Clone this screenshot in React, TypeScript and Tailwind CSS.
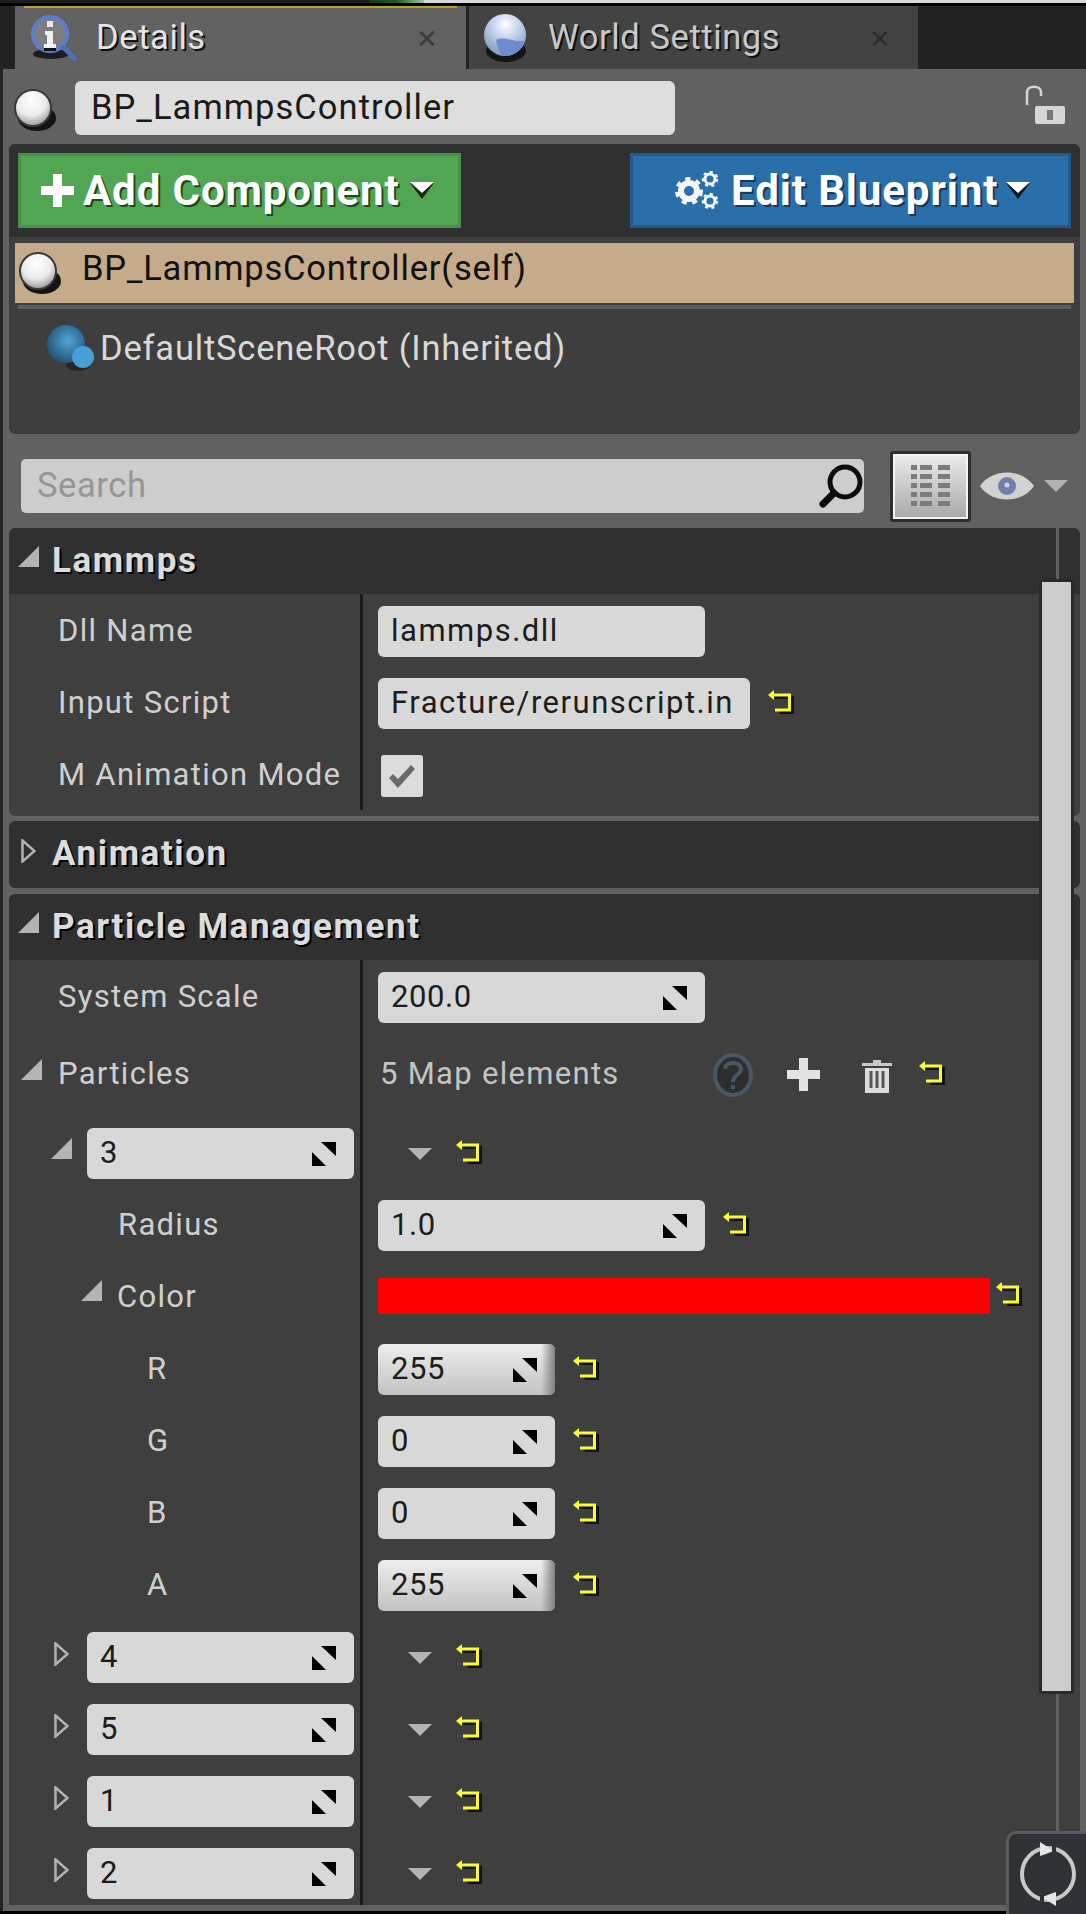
import type { ReactNode } from "react";

const Spin = () => (
  <svg width="24" height="24" viewBox="0 0 24 24" className="shrink-0">
    <polygon points="9,0 24,0 24,14" fill="#000" />
    <polygon points="0,10 14,24 0,24" fill="#000" />
  </svg>
);

const Reset = () => (
  <svg width="25" height="25" viewBox="0 2 25 25" className="shrink-0 overflow-visible">
    <g fill="none" stroke="#111" strokeWidth="3">
      <path d="M4 6H22V21H9" transform="translate(2.5 2.5)" />
    </g>
    <g fill="none" stroke="#fbfb2e" strokeWidth="3">
      <path d="M3 6H21.5V21H7" />
    </g>
    <polygon points="0,6 6,1 6,11" fill="#fbfb2e" />
  </svg>
);

const OpenTri = () => (
  <svg width="21" height="21" viewBox="0 0 21 21" className="shrink-0 mb-[10px]">
    <polygon points="0,21 21,0 21,21" fill="#b4b4b4" />
  </svg>
);

const ClosedTri = () => (
  <svg width="15" height="24" viewBox="0 0 15 24" className="shrink-0 mb-[8px]">
    <path d="M1.5 1.5V22.5L13.5 12Z" fill="none" stroke="#b4b4b4" strokeWidth="2.5" />
  </svg>
);

const DownTri = ({ color = "#b4b4b4" }: { color?: string }) => (
  <svg width="24" height="12" viewBox="0 0 24 12" className="shrink-0">
    <polygon points="0,0 24,0 12,12" fill={color} />
  </svg>
);

const Caret = () => (
  <svg width="24" height="18" viewBox="0 0 24 18" className="shrink-0">
    <polygon points="0,1 24,1 12,17" fill="#000" opacity="0.75" />
    <polygon points="0,0 24,0 12,11" fill="#fff" />
  </svg>
);

const Sphere = ({ id }: { id: string }) => (
  <svg width="44" height="44" viewBox="0 0 44 44" className="shrink-0">
    <defs>
      <radialGradient id={id} cx="0.45" cy="0.3" r="0.75">
        <stop offset="0" stopColor="#ffffff" />
        <stop offset="0.55" stopColor="#ebebeb" />
        <stop offset="1" stopColor="#8e8e8e" />
      </radialGradient>
    </defs>
    <ellipse cx="24" cy="30" rx="19" ry="13" fill="#141414" />
    <circle cx="20" cy="20" r="18" fill={`url(#${id})`} stroke="#3a3a3a" strokeWidth="2" />
  </svg>
);

const BlueSphere = () => (
  <svg width="50" height="48" viewBox="0 0 50 48" className="shrink-0">
    <defs>
      <radialGradient id="bs" cx="0.55" cy="0.42" r="0.62">
        <stop offset="0" stopColor="#4fa6d6" />
        <stop offset="1" stopColor="#1f4f72" />
      </radialGradient>
    </defs>
    <ellipse cx="32" cy="40" rx="12" ry="6" fill="#1c1c1c" opacity="0.7" />
    <circle cx="20" cy="19" r="19" fill="url(#bs)" />
    <circle cx="37" cy="32" r="11" fill="#46a0d6" />
  </svg>
);

const InfoIcon = () => (
  <svg width="50" height="50" viewBox="0 0 50 50" className="shrink-0">
    <ellipse cx="22" cy="41" rx="18" ry="5" fill="#1c1c1c" />
    <circle cx="21" cy="21" r="17" fill="#7d7d7d" stroke="#5c7dcc" strokeWidth="4" />
    <path d="M33 33L47 47" stroke="#4c6fc0" strokeWidth="5" />
    <rect x="18" y="8" width="6" height="6" fill="#e8e8e8" />
    <path d="M16 18H24V31H27V35H15V31H18V22H16Z" fill="#f0f0f0" />
    <rect x="15" y="35" width="12" height="3" fill="#111" />
  </svg>
);

const GlobeIcon = () => (
  <svg width="46" height="50" viewBox="0 0 46 50" className="shrink-0">
    <defs>
      <radialGradient id="gl" cx="0.52" cy="0.25" r="0.8">
        <stop offset="0" stopColor="#ffffff" />
        <stop offset="0.4" stopColor="#c5d3ec" />
        <stop offset="1" stopColor="#7d8fb8" />
      </radialGradient>
    </defs>
    <ellipse cx="24" cy="38" rx="20" ry="11" fill="#151515" />
    <circle cx="23" cy="22" r="21" fill="url(#gl)" />
    <path d="M14 27C22 23 30 29 42 28C40 37 32 43 23 43C19 43 16 37 14 27Z" fill="#6f8bcf" />
  </svg>
);

const LockIcon = () => (
  <svg width="40" height="40" viewBox="0 0 40 40" className="shrink-0">
    <path d="M2 21V8C2 1 16 1 16 8V12" fill="none" stroke="#d6d6d6" strokeWidth="2.5" />
    <rect x="10" y="22" width="30" height="18" rx="2" fill="#d6d6d6" />
    <rect x="22" y="26" width="6" height="10" fill="#777" />
  </svg>
);

const GearsIcon = () => (
  <svg width="46" height="42" viewBox="0 0 46 42" className="shrink-0">
    <g fill="none" stroke="#f4f4f4">
      <circle cx="14" cy="21" r="8" strokeWidth="6" />
      <circle cx="14" cy="21" r="12" strokeWidth="4" strokeDasharray="5 5.5" />
      <circle cx="35" cy="9" r="5" strokeWidth="3" />
      <circle cx="35" cy="9" r="7" strokeWidth="2.5" strokeDasharray="3 3.5" />
      <circle cx="35" cy="31" r="5" strokeWidth="3" />
      <circle cx="35" cy="31" r="7" strokeWidth="2.5" strokeDasharray="3 3.5" />
    </g>
  </svg>
);

const SearchGlass = () => (
  <svg width="46" height="44" viewBox="0 0 46 44" className="shrink-0">
    <circle cx="27" cy="18" r="15" fill="none" stroke="#0c0c0c" strokeWidth="5" />
    <path d="M16 29L5 40" stroke="#0c0c0c" strokeWidth="7" strokeLinecap="round" />
  </svg>
);

const GridGlyph = () => (
  <svg width="40" height="42" viewBox="0 0 40 42" className="shrink-0">
    {[0, 9, 18, 27, 36].map((y) => (
      <g key={y} fill="#7c7c7c">
        <rect x="0" y={y} width="6" height="5" />
        <rect x="9" y={y} width="12" height="5" />
        <rect x="27" y={y} width="12" height="5" />
      </g>
    ))}
  </svg>
);

const EyeIcon = () => (
  <svg width="54" height="32" viewBox="0 0 54 32" className="shrink-0">
    <path d="M0 16C12 -2 42 -2 54 16C42 34 12 34 0 16Z" fill="#d2d2d2" />
    <circle cx="27" cy="16" r="9" fill="#6f83a8" />
    <circle cx="27" cy="15" r="2.5" fill="#cdd5e2" />
  </svg>
);

const HelpIcon = () => (
  <svg width="42" height="46" viewBox="0 0 42 46" className="shrink-0">
    <ellipse cx="21" cy="23" rx="18" ry="20" fill="#2e2e2e" stroke="#4a5666" strokeWidth="4" />
    <path d="M13 17C13 9 29 9 29 17C29 23 21 22 21 30" fill="none" stroke="#4a5666" strokeWidth="4" />
    <rect x="19" y="33" width="4" height="4" fill="#4a5666" />
  </svg>
);

const PlusIcon = ({ color = "#e2e2e2" }: { color?: string }) => (
  <svg width="33" height="33" viewBox="0 0 33 33" className="shrink-0">
    <path d="M12 0H21V12H33V21H21V33H12V21H0V12H12Z" fill={color} />
  </svg>
);

const TrashIcon = () => (
  <svg width="30" height="36" viewBox="0 0 30 36" className="shrink-0">
    <path d="M0 6H11V3H19V6H30V9H0Z" fill="#c8c8c8" />
    <path d="M3 11H27V36H3Z" fill="#dcdcdc" />
    <path d="M9 14V31M15 14V31M21 14V31" stroke="#555" strokeWidth="3" />
  </svg>
);

const RefreshIcon = () => (
  <svg width="60" height="66" viewBox="0 0 60 66" className="shrink-0">
    <circle cx="30" cy="33" r="26" fill="none" stroke="#c9c9c9" strokeWidth="4" />
    <polygon points="22,1 36,10 22,15" fill="#e6e6e6" />
    <polygon points="38,65 24,56 38,51" fill="#e6e6e6" />
    <path d="M36 3V12M24 54V63" stroke="#2f3338" strokeWidth="4" />
  </svg>
);

const Field = ({
  text,
  width,
  spin = false,
  shaded = false,
}: {
  text: string;
  width: string;
  spin?: boolean;
  shaded?: boolean;
}) => (
  <div
    className={`relative h-[51px] shrink-0 rounded-[6px] flex items-center justify-between pl-[13px] pr-[18px] text-[#1c1c1c] overflow-hidden ${width} ${
      shaded ? "bg-gradient-to-b from-[#eeeeee] to-[#c2c2c2]" : "bg-[#d8d8d8]"
    }`}
  >
    <span className={`whitespace-nowrap ${spin ? "tracking-[0.6px]" : "tracking-[1.5px]"}`}>{text}</span>
    {spin && <Spin />}
    {shaded && (
      <div className="absolute right-0 top-0 h-full w-[14px] bg-gradient-to-r from-transparent to-[#808080]" />
    )}
  </div>
);

const Row = ({
  left,
  right,
  height = "h-[72px]",
  top = "pt-3",
}: {
  left: ReactNode;
  right: ReactNode;
  height?: string;
  top?: string;
}) => (
  <div className={`flex shrink-0 ${height}`}>
    <div className={`w-[354px] shrink-0 border-r-[3px] border-[#1b1b1b] ${top}`}>
      <div className="h-[51px] flex items-center text-[#cfcfcf] whitespace-nowrap tracking-[1.3px]">{left}</div>
    </div>
    <div className={`flex-1 pl-[15px] ${top}`}>
      <div className="h-[51px] flex items-center">{right}</div>
    </div>
  </div>
);

const Header = ({ title, open, height }: { title: string; open: boolean; height: string }) => (
  <div className={`flex items-center bg-[#303030] pl-[9px] ${height}`}>
    <div className="w-[34px] shrink-0 flex items-center">
      {open ? (
        <OpenTri />
      ) : (
        <div className="pl-[3px] flex">
          <ClosedTri />
        </div>
      )}
    </div>
    <span className="font-bold text-[35px] tracking-[1.6px] text-[#dcdcdc] [text-shadow:2px_2px_0_#000]">
      {title}
    </span>
  </div>
);

const KeyRow = ({ id, open = false }: { id: string; open?: boolean }) => (
  <Row
    left={
      <>
        <div className={`w-[78px] shrink-0 flex justify-end items-center ${open ? "pr-[15px]" : "pr-[18px]"}`}>
          {open ? <OpenTri /> : <ClosedTri />}
        </div>
        <Field text={id} width="w-[267px]" spin />
      </>
    }
    right={
      <div className="pl-[30px] flex items-center gap-[24px]">
        <DownTri />
        <Reset />
      </div>
    }
  />
);

const ChannelRow = ({ name, value, shaded = false }: { name: string; value: string; shaded?: boolean }) => (
  <Row
    left={<span className="pl-[138px]">{name}</span>}
    right={
      <div className="flex items-center gap-[18px]">
        <Field text={value} width="w-[177px]" spin shaded={shaded} />
        <Reset />
      </div>
    }
  />
);

export default function App() {
  return (
    <div className="relative w-[1086px] h-[1914px] overflow-hidden bg-[#222222] flex flex-col font-['Roboto',sans-serif] text-[31px] tracking-[0.6px]">
      {/* window strip above the tabs */}
      <div className="h-[3px] flex shrink-0">
        <div className="w-[369px] bg-[#1c1c1c]" />
        <div className="w-[55px] bg-gradient-to-r from-[#123d12] via-[#1f5a1f] to-[#9fc79f]" />
        <div className="flex-1 bg-[#d8d8d8]" />
      </div>
      <div className="h-[3px] bg-black shrink-0" />

      {/* tabs */}
      <div className="h-[63px] flex shrink-0 text-[34.5px]">
        <div className="w-[15px] bg-[#222222]" />
        <div className="relative w-[451px] bg-[#626262] flex items-center pl-[14px] pr-[27px]">
          <div className="absolute left-[9px] right-[9px] top-0 h-[2px] bg-[#b9a322]" />
          <InfoIcon />
          <span className="ml-[17px] text-[#e4e4e4] [text-shadow:2px_2px_0_#111] flex-1">Details</span>
          <span className="text-[#3c3c3c] text-[26px] pt-[4px]">✕</span>
        </div>
        <div className="w-[3px] bg-[#222222]" />
        <div className="w-[449px] bg-[#434343] flex items-center pl-[13px] pr-[26px]">
          <GlobeIcon />
          <span className="ml-[20px] text-[#c8c8c8] [text-shadow:2px_2px_0_#111] flex-1">World Settings</span>
          <span className="text-[#2e2e2e] text-[26px] pt-[4px]">✕</span>
        </div>
      </div>

      {/* panel */}
      <div className="ml-[3px] flex-1 bg-[#616161] pb-[6px] flex flex-col px-[6px] min-h-0">
        {/* actor name */}
        <div className="h-[75px] flex shrink-0 pt-[12px]">
          <div className="w-[66px] pl-[4px] pt-[7px]">
            <Sphere id="s1" />
          </div>
          <div className="w-[600px] h-[54px] bg-[#dedede] rounded-[6px] flex items-center pl-[16px] text-[#1a1a1a] text-[34.5px] tracking-[1.05px]">
            BP_LammpsController
          </div>
          <div className="ml-auto pr-[15px] pt-[3px]">
            <LockIcon />
          </div>
        </div>

        {/* components */}
        <div className="h-[290px] shrink-0 bg-[#3e3e3e] rounded-[6px] overflow-hidden flex flex-col text-[34.5px] tracking-[0.8px]">
          <div className="h-[93px] shrink-0 bg-[#303030] flex justify-between px-[9px] pt-[9px]">
            <div className="w-[443px] h-[75px] bg-[#52a552] border-[3px] border-[#4a904a] flex items-center pl-[20px] text-white font-bold text-[42px] tracking-[0.9px] [text-shadow:2px_2px_0_#1b4a1b]">
              <PlusIcon color="#ffffff" />
              <span className="ml-[9px]">Add Component</span>
              <span className="ml-[10px]">
                <Caret />
              </span>
            </div>
            <div className="w-[441px] h-[75px] bg-[#2a6fa9] border-[3px] border-[#25598a] flex items-center pl-[42px] text-white font-bold text-[42px] tracking-[0.9px] [text-shadow:2px_2px_0_#123a5e]">
              <GearsIcon />
              <span className="ml-[10px]">Edit Blueprint</span>
              <span className="ml-[8px]">
                <Caret />
              </span>
            </div>
          </div>
          <div className="h-[60px] mt-[6px] mx-[6px] shrink-0 bg-[#c5ab89] flex items-center pl-[3px] text-[#111111]">
            <Sphere id="s2" />
            <span className="ml-[20px] pb-[8px]">BP_LammpsController(self)</span>
          </div>
          <div className="h-[4px] mt-[2px] mx-[9px] shrink-0 bg-[#5c5c5c]" />
          <div className="flex items-center pl-[37px] pt-[14px] text-[#d8d8d8]">
            <BlueSphere />
            <span className="ml-[4px]">DefaultSceneRoot (Inherited)</span>
          </div>
        </div>

        {/* search */}
        <div className="h-[94px] shrink-0 flex items-center pl-[12px] pt-[10px]">
          <div className="w-[843px] h-[54px] bg-[#cdcdcd] rounded-[5px] flex items-center justify-between pl-[16px] text-[#969696] text-[34.5px]">
            <span>Search</span>
            <SearchGlass />
          </div>
          <div className="ml-[26px] w-[81px] h-[71px] shrink-0 border-[3px] border-[#2e2e2e] rounded-[3px] flex items-center justify-center bg-gradient-to-b from-[#ececec] to-[#a8a8a8] shadow-[inset_0_0_0_2px_#f4f4f4]">
            <GridGlyph />
          </div>
          <div className="ml-[9px]">
            <EyeIcon />
          </div>
          <div className="ml-[10px]">
            <DownTri color="#b0b0b0" />
          </div>
        </div>

        {/* property list */}
        <div className="relative flex-1 min-h-0 overflow-hidden flex flex-col rounded-t-[6px]">
          <Header title="Lammps" open height="h-[66px] shrink-0" />
          <div className="h-[222px] shrink-0 bg-[#3f3f3f] rounded-b-[6px]">
            <Row left={<span className="pl-[49px]">Dll Name</span>} right={<Field text="lammps.dll" width="w-[327px]" />} />
            <Row
              left={<span className="pl-[49px]">Input Script</span>}
              right={
                <div className="flex items-center gap-[18px]">
                  <Field text="Fracture/rerunscript.in" width="w-[372px]" />
                  <Reset />
                </div>
              }
            />
            <Row
              left={<span className="pl-[49px]">M Animation Mode</span>}
              right={
                <div className="ml-[3px] w-[42px] h-[42px] bg-[#dcdcdc] rounded-[3px] flex items-center justify-center">
                  <svg width="30" height="28" viewBox="0 0 30 28">
                    <path d="M2 16L6 12L11 17L24 3L28 7L11 26Z" fill="#6a6a6a" />
                  </svg>
                </div>
              }
            />
          </div>

          <div className="mt-[5px] shrink-0 rounded-[6px] overflow-hidden">
            <Header title="Animation" open={false} height="h-[67px]" />
          </div>

          <div className="mt-[6px] flex-1 min-h-0 rounded-t-[6px] overflow-hidden bg-[#3f3f3f]">
            <Header title="Particle Management" open height="h-[66px]" />
            <Row
              left={<span className="pl-[49px]">System Scale</span>}
              right={<Field text="200.0" width="w-[327px]" spin />}
            />
            <Row
              height="h-[84px]"
              top="pt-[17px]"
              left={
                <>
                  <div className="pl-[12px] pr-[16px] flex items-center">
                    <OpenTri />
                  </div>
                  <span>Particles</span>
                </>
              }
              right={
                <div className="flex items-center w-full text-[#c4c4c4] tracking-[1.3px]">
                  <span className="pl-[2px] w-[334px] whitespace-nowrap">5 Map elements</span>
                  <HelpIcon />
                  <div className="ml-[33px]">
                    <PlusIcon />
                  </div>
                  <div className="ml-[42px]">
                    <TrashIcon />
                  </div>
                  <div className="ml-[27px]">
                    <Reset />
                  </div>
                </div>
              }
            />
            <KeyRow id="3" open />
            <Row
              left={<span className="pl-[109px]">Radius</span>}
              right={
                <div className="flex items-center gap-[18px]">
                  <Field text="1.0" width="w-[327px]" spin />
                  <Reset />
                </div>
              }
            />
            <Row
              top="pt-[10px]"
              left={
                <>
                  <div className="pl-[72px] pr-[15px] flex items-center">
                    <OpenTri />
                  </div>
                  <span className="pt-[3px]">Color</span>
                </>
              }
              right={
                <div className="flex items-center gap-[6px]">
                  <div className="w-[612px] h-[36px] bg-[#ff0000]" />
                  <Reset />
                </div>
              }
            />
            <ChannelRow name="R" value="255" shaded />
            <ChannelRow name="G" value="0" />
            <ChannelRow name="B" value="0" />
            <ChannelRow name="A" value="255" shaded />
            <KeyRow id="4" />
            <KeyRow id="5" />
            <KeyRow id="1" />
            <KeyRow id="2" />
          </div>

          {/* scrollbar sits over the rows */}
          <div className="absolute left-[1047px] top-0 bottom-0 w-[3px] bg-[#606060]" />
          <div className="absolute left-[1030px] top-[51px] w-[35px] h-[1115px] bg-[#cdcdcd] border-[3px] border-[#2a2a2a] rounded-[3px]" />
        </div>
      </div>
      <div className="h-[3px] bg-black shrink-0" />

      {/* corner overlay */}
      <div className="absolute right-0 bottom-0 w-[80px] h-[83px] bg-[#2f3338] border-t-[3px] border-l-[3px] border-[#5a5a5a] rounded-tl-[10px] flex items-center justify-center">
        <RefreshIcon />
      </div>
    </div>
  );
}
